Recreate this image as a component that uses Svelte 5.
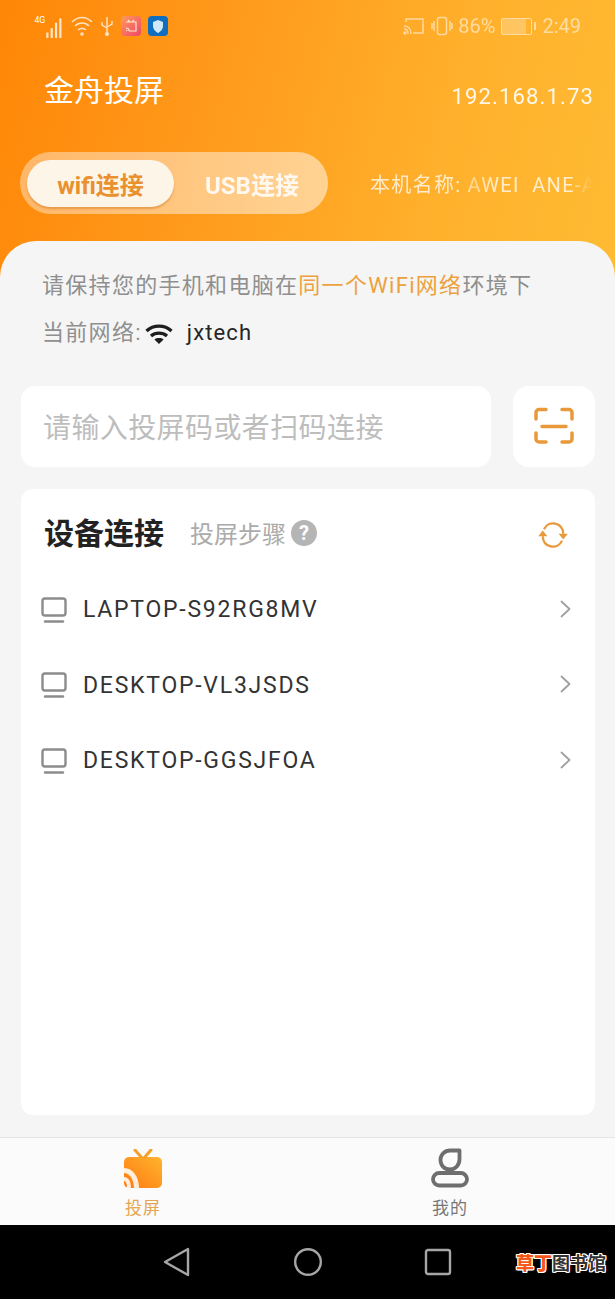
<script>
  const devices = ["LAPTOP-S92RG8MV", "DESKTOP-VL3JSDS", "DESKTOP-GGSJFOA"];
</script>

<div class="page">
  <header class="hero">
    <div class="status">
      <div class="status-left">
        <svg width="30" height="26" viewBox="0 0 27 24">
          <text x="0" y="9" class="net">4G</text>
          <g fill="#fff" opacity=".8">
            <rect x="11" y="18" width="2" height="5" /><rect x="15" y="14" width="2" height="9" /><rect x="19" y="9" width="2" height="14" /><rect x="23" y="5" width="2" height="18" />
          </g>
        </svg>
        <svg width="22" height="22" viewBox="0 0 22 22" fill="none" stroke="#fff" stroke-width="1.6" opacity=".75">
          <path d="M1 7c6-6 14-6 20 0M4 11c4-4 10-4 14 0M7 15c2.500-2 5.500-2 8 0" />
          <circle cx="11" cy="19" r="1" fill="#fff" />
        </svg>
        <svg width="14" height="20" viewBox="0 0 14 20" fill="none" stroke="#fff" stroke-width="1.4" opacity=".75">
          <path d="M7 1v18M2 6v3l5 3M12 5v3l-5 3" />
          <circle cx="7" cy="18" r="1.300" fill="#fff" />
        </svg>
        <div class="app-badge pink">
          <svg width="14" height="14" viewBox="0 0 14 14" fill="none" stroke="#ffe9c8" stroke-width="1.200"><path d="M4 1l2 2M10 1L8 3M2 3h10v9H5M2 9c2 0 3 1 3 3M2 11c.6 0 1 .4 1 1" /></svg>
        </div>
        <div class="app-badge blue">
          <svg width="12" height="13" viewBox="0 0 12 13"><path d="M6 0l5 2v4c0 3.500-2.500 5.500-5 7-2.500-1.500-5-3.500-5-7V2z" fill="#cfe8f7" /></svg>
        </div>
      </div>
      <div class="status-right">
        <svg width="22" height="18" viewBox="0 0 22 18" fill="none" stroke="#fff" stroke-width="1.500">
          <path d="M3 5V2h17v14H10M1 9c4 0 7 3 7 8M1 12c2.500 0 4 2 4 5" /><circle cx="1.800" cy="16" r="1" fill="#fff" />
        </svg>
        <svg width="22" height="20" viewBox="0 0 22 20" fill="none" stroke="#fff" stroke-width="1.500">
          <rect x="6.500" y="1.500" width="9" height="17" rx="2" /><path d="M3 5v10M1 7v6M19 5v10M21 7v6" />
        </svg>
        <span class="pct">86%</span>
        <div class="battery"><span></span></div>
        <span class="time">2:49</span>
      </div>
    </div>

    <div class="title-row">
      <h1>金舟投屏</h1>
      <span class="ip">192.168.1.73</span>
    </div>

    <div class="mode-row">
      <div class="toggle">
        <div class="tab active">wifi连接</div>
        <div class="tab">USB连接</div>
      </div>
      <div class="device-name">本机名称: <span>AWEI&nbsp;&nbsp;ANE-A</span></div>
    </div>
  </header>

  <main class="sheet">
    <p class="tip">请保持您的手机和电脑在<em>同一个WiFi网络</em>环境下</p>
    <p class="network">
      当前网络:
      <svg width="28" height="21" viewBox="0 0 28 21" fill="none" stroke="#1e1e1e" stroke-width="3.400">
        <path d="M1.500 8c7-6.500 18-6.500 25 0M6 13c4.500-3.800 11.500-3.800 16 0" />
        <path d="M14 21l-4.600-4.600c2.500-1.800 6.700-1.800 9.200 0z" fill="#1e1e1e" stroke="none" />
      </svg>
      <span>jxtech</span>
    </p>

    <div class="search-row">
      <div class="code-input">请输入投屏码或者扫码连接</div>
      <button class="scan" aria-label="扫码">
        <svg width="40" height="40" viewBox="0 0 40 40" fill="none" stroke="#e8993a" stroke-width="3.500" stroke-linecap="round">
          <path d="M12 2.500H5a3 3 0 0 0-3 3V12M28 2.500h7a3 3 0 0 1 3 3V12M2 26v6a3 3 0 0 0 3 3h7M38 26v6a3 3 0 0 1-3 3h-7M8 19.500h24" />
        </svg>
      </button>
    </div>

    <section class="card">
      <div class="card-head">
        <h2>设备连接</h2>
        <span class="steps">投屏步骤</span>
        <span class="help">?</span>
        <svg class="refresh" width="34" height="34" viewBox="0 0 30 30" fill="none" stroke="#e8993a" stroke-width="2">
          <path d="M7 10C9 6 13 4 17 5c4 1 7 4 7 9" />
          <path d="M23 20c-2 4-6 6-10 5-4-1-7-4-7-9" />
          <path d="M20 14h8l-4 5zM2 16h8l-4-5z" fill="#e8993a" stroke="none" />
        </svg>
      </div>
      <ul>
        {#each devices as name}
          <li>
            <svg width="26" height="26" viewBox="0 0 26 26" fill="none" stroke="#8c8c8c" stroke-width="2.400">
              <rect x="1.500" y="1.500" width="23" height="17" rx="2.500" />
              <path d="M4 24.500h18" stroke-linecap="round" />
            </svg>
            <span class="name">{name}</span>
            <svg class="chev" width="11" height="18" viewBox="0 0 11 18" fill="none" stroke="#a0a0a0" stroke-width="1.800" stroke-linecap="round" stroke-linejoin="round">
              <path d="M1.500 1.500L9.500 9l-8 7.500" />
            </svg>
          </li>
        {/each}
      </ul>
    </section>
  </main>

  <nav class="tabbar">
    <div class="tab-item on">
      <svg width="40" height="40" viewBox="0 0 40 40">
        <defs>
          <linearGradient id="tv" x1="0" y1="1" x2="1" y2="0">
            <stop offset="0" stop-color="#ff7a14" />
            <stop offset="1" stop-color="#ffb42c" />
          </linearGradient>
        </defs>
        <path d="M12 1l7 8M28 1l-7 8" stroke="#f6a02a" stroke-width="3" stroke-linecap="round" fill="none" />
        <rect x="1" y="8" width="38" height="31" rx="5" fill="url(#tv)" />
        <path d="M1 19c9 0 15 9 15 20h-5c0-8-4-15-10-15zM1 28c5 0 7 5 7 11H4c0-4-1-7-3-7z" fill="#fff" opacity=".85" />
      </svg>
      <span>投屏</span>
    </div>
    <div class="tab-item me">
      <svg width="40" height="40" viewBox="0 0 40 40" fill="none" stroke="#6e6e6e" stroke-width="3.800" stroke-linejoin="round">
        <path d="M28 2.500h1.500V11c0 6-4 10.500-9.500 10.500S10.500 17.500 10.500 12 15 2.500 20 2.500z" />
        <rect x="3" y="25" width="34" height="12.500" rx="6.250" />
      </svg>
      <span>我的</span>
    </div>
  </nav>

  <footer class="navbar">
    <svg width="28" height="30" viewBox="0 0 28 30" fill="none" stroke="#a6a6a6" stroke-width="2.400" stroke-linejoin="round"><path d="M25 2v26L2 15z" /></svg>
    <svg width="30" height="30" viewBox="0 0 30 30" fill="none" stroke="#a6a6a6" stroke-width="2.400"><circle cx="15" cy="15" r="12.800" /></svg>
    <svg width="28" height="28" viewBox="0 0 28 28" fill="none" stroke="#a6a6a6" stroke-width="2.400"><rect x="2" y="2" width="24" height="24" rx="2" /></svg>
    <div class="mark"><b>草丁</b>图书馆</div>
  </footer>
</div>

<style>
  :global(body) {
    margin: 0;
    background: #000;
  }

  .page {
    width: 615px;
    height: 1299px;
    display: flex;
    flex-direction: column;
    overflow: hidden;
    font-family: "Roboto", "Noto Sans CJK SC", sans-serif;
    background: #f5f5f5;
  }

  .hero {
    height: 281px;
    flex: none;
    background: linear-gradient(105deg, #ff8606 0%, #ff9a1c 35%, #ffb02c 70%, #ffbb33 100%);
    color: #fff;
  }

  .status {
    height: 52px;
    box-sizing: border-box;
    padding: 0 34px 0 34px;
    display: flex;
    justify-content: space-between;
    align-items: center;
  }

  .status-left {
    display: flex;
    align-items: center;
    gap: 7px;
  }

  .net {
    font: 8px "Roboto", sans-serif;
    fill: #fff;
  }

  .app-badge {
    width: 20px;
    height: 20px;
    border-radius: 4px;
    display: flex;
    align-items: center;
    justify-content: center;
  }

  .pink { background: linear-gradient(135deg, #ff9a5c, #f0466a); }
  .blue { background: #0f6ec0; }

  .status-right {
    display: flex;
    align-items: center;
    gap: 6px;
    opacity: .55;
    font-size: 20px;
  }

  .pct { margin-left: -1px; }

  .battery {
    width: 29px;
    height: 15px;
    border: 1.500px solid #fff;
    border-radius: 2px;
    position: relative;
    margin-right: 4px;
  }

  .battery span {
    display: block;
    width: 24px;
    height: 15px;
    background: rgba(255, 255, 255, .45);
  }

  .battery::after {
    content: "";
    position: absolute;
    right: -5px;
    top: 3px;
    width: 2px;
    height: 8px;
    background: #fff;
  }

  .title-row {
    height: 78px;
    box-sizing: border-box;
    padding: 0 21px 0 44px;
    display: flex;
    justify-content: space-between;
    align-items: center;
  }

  h1 {
    margin: 0;
    font-size: 30px;
    font-weight: 400;
    line-height: 1;
  }

  .ip {
    font-size: 22px;
    letter-spacing: 1.150px;
    opacity: .9;
    margin-top: 11px;
  }

  .mode-row {
    display: flex;
    align-items: center;
    margin-top: 22px;
    padding-left: 20px;
  }

  .toggle {
    width: 308px;
    height: 62px;
    flex: none;
    box-sizing: border-box;
    padding: 7px;
    display: flex;
    align-items: center;
    border-radius: 31px;
    background: linear-gradient(90deg, rgba(255, 255, 255, .38), rgba(255, 255, 255, .5));
  }

  .tab {
    font-size: 24px;
    font-weight: 700;
    color: #fff;
    opacity: .88;
    margin-left: 31px;
    white-space: nowrap;
  }

  .tab.active {
    width: 147px;
    height: 47px;
    margin: 0;
    flex: none;
    display: flex;
    align-items: center;
    justify-content: center;
    border-radius: 24px;
    background: #fdf5e8;
    color: #e8912e;
    opacity: 1;
    box-shadow: 0 2px 2px rgba(214, 128, 40, .55);
  }

  .device-name {
    margin-left: 42px;
    width: 245px;
    overflow: hidden;
    white-space: nowrap;
    font-size: 20px;
    letter-spacing: 1.300px;
    color: rgba(255, 255, 255, .75);
    -webkit-mask-image: linear-gradient(90deg, #000 0 88px, rgba(0,0,0,.6) 105px, #000 125px, #000 200px, transparent 222px);
    mask-image: linear-gradient(90deg, #000 0 88px, rgba(0,0,0,.6) 105px, #000 125px, #000 200px, transparent 222px);
  }

  .sheet {
    flex: 1;
    min-height: 0;
    margin-top: -40px;
    box-sizing: border-box;
    padding: 30px 20px 22px 21px;
    display: flex;
    flex-direction: column;
    border-radius: 36px 36px 0 0;
    background: #f5f5f5;
  }

  .tip, .network {
    margin: 0 0 0 21px;
    font-size: 22px;
    letter-spacing: 1.300px;
    color: #8f8f8f;
    line-height: 30px;
    white-space: nowrap;
  }

  .tip em {
    font-style: normal;
    color: #eca13e;
  }

  .network {
    margin-top: 17px;
    display: flex;
    align-items: center;
  }

  .network svg {
    margin: 0 14px 0 3px;
  }

  .network span {
    color: #262626;
    letter-spacing: 1.100px;
  }

  .search-row {
    display: flex;
    justify-content: space-between;
    margin-top: 38px;
  }

  .code-input {
    width: 470px;
    height: 81px;
    box-sizing: border-box;
    padding: 0 22px 2px;
    display: flex;
    align-items: center;
    background: #fff;
    border-radius: 14px;
    font-size: 28px;
    letter-spacing: .4px;
    color: #bdbdbd;
    white-space: nowrap;
  }

  .scan {
    width: 82px;
    height: 81px;
    padding: 0;
    border: 0;
    background: #fff;
    border-radius: 16px;
    display: flex;
    align-items: center;
    justify-content: center;
  }

  .card {
    flex: 1;
    min-height: 0;
    margin-top: 22px;
    background: #fff;
    border-radius: 12px;
    padding: 0 22px 0 20px;
  }

  .card-head {
    height: 88px;
    display: flex;
    align-items: center;
    padding-left: 3px;
  }

  h2 {
    margin: -4px 0 0;
    font-size: 30px;
    font-weight: 700;
    color: #222;
  }

  .steps {
    margin-left: 26px;
    font-size: 24px;
    color: #ababab;
    margin-top: -2px;
  }

  .help {
    width: 26px;
    height: 26px;
    margin-left: 5px;
    border-radius: 50%;
    background: #b5b5b5;
    color: #fff;
    font-size: 20px;
    font-weight: 700;
    display: flex;
    align-items: center;
    justify-content: center;
  }

  .refresh {
    margin-left: auto;
    margin-right: 3px;
    margin-top: 4px;
  }

  ul {
    list-style: none;
    margin: -5px 0 0;
    padding: 0;
  }

  li {
    height: 75.500px;
    display: flex;
    align-items: center;
  }

  .name {
    margin-left: 16px;
    font-size: 23px;
    letter-spacing: 1.750px;
    color: #333;
  }

  .chev {
    margin-left: auto;
    margin-right: 2px;
    margin-top: -2px;
  }

  .tabbar {
    height: 88px;
    flex: none;
    box-sizing: border-box;
    border-top: 1px solid #e4e4e4;
    background: #fbfbfb;
    display: flex;
  }

  .tab-item {
    flex: none;
    width: 286px;
    display: flex;
    flex-direction: column;
    align-items: center;
    padding-top: 11px;
    box-sizing: border-box;
    font-size: 17px;
    letter-spacing: 1px;
    color: #777;
    line-height: 24px;
  }

  .tab-item.me {
    width: 328px;
    padding-top: 10px;
  }

  .tab-item.me svg {
    margin-bottom: 8px;
  }

  .tab-item.on {
    color: #e4a651;
  }

  .tab-item svg {
    margin-bottom: 7px;
  }

  .navbar {
    height: 74px;
    flex: none;
    background: #000;
    position: relative;
    display: flex;
    align-items: center;
    padding: 0 163px 0 163px;
    justify-content: space-between;
    box-sizing: border-box;
  }

  .mark {
    position: absolute;
    right: 9px;
    top: 26px;
    font-size: 18px;
    font-weight: 700;
    line-height: 26px;
    color: #333;
    white-space: nowrap;
    text-shadow: 1px 0 #fff, -1px 0 #fff, 0 1px #fff, 0 -1px #fff, 1px 1px #fff, -1px -1px #fff, 1px -1px #fff, -1px 1px #fff;
  }

  .mark b {
    color: #f4581a;
  }
</style>
